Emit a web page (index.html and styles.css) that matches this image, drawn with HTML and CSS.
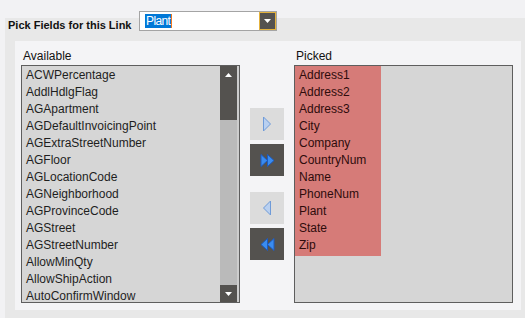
FILE: index.html
```html
<!DOCTYPE html>
<html>
<head>
  <meta charset="UTF-8">
  <title>Pick Fields</title>
  <link rel="stylesheet" href="styles.css">
</head>
<body>
  <div class="panel">
    <div class="panel-head">
      <div class="head-title">Pick Fields for this Link</div>
      <div class="combo">
        <div class="combo-text"><span class="combo-sel">Plant</span><span class="caret"></span></div>
        <div class="combo-btn">
          <svg width="7" height="4" viewBox="0 0 7 4"><polygon points="0,0 7,0 3.5,4" fill="#fff"/></svg>
        </div>
      </div>
    </div>

    <div class="panel-body">
      <!-- available fields -->
      <div class="col">
        <div class="col-label">Available</div>
        <div class="listbox">
          <ul class="items">
            <li>ACWPercentage</li>
            <li>AddlHdlgFlag</li>
            <li>AGApartment</li>
            <li>AGDefaultInvoicingPoint</li>
            <li>AGExtraStreetNumber</li>
            <li>AGFloor</li>
            <li>AGLocationCode</li>
            <li>AGNeighborhood</li>
            <li>AGProvinceCode</li>
            <li>AGStreet</li>
            <li>AGStreetNumber</li>
            <li>AllowMinQty</li>
            <li>AllowShipAction</li>
            <li>AutoConfirmWindow</li>
          </ul>
          <div class="scrollbar">
            <div class="sb-top">
              <svg width="7" height="4" viewBox="0 0 7 4"><polygon points="3.5,0 7,4 0,4" fill="#fff"/></svg>
            </div>
            <div class="sb-track"></div>
            <div class="sb-bottom">
              <svg width="7" height="4" viewBox="0 0 7 4"><polygon points="0,0 7,0 3.5,4" fill="#fff"/></svg>
            </div>
          </div>
        </div>
      </div>

      <!-- move buttons -->
      <div class="moves">
        <div class="move-btn light">
          <svg width="10" height="16" viewBox="0 0 10 16"><polygon points="1.5,1 8.5,8 1.5,15" fill="#b9d0f0" stroke="#6f9bd8" stroke-width="1"/></svg>
        </div>
        <div class="move-btn dark">
          <svg width="15" height="13" viewBox="0 0 15 13"><polygon points="1,0.5 7.5,6.5 1,12.5" fill="#3a8cf0" stroke="#1d5bc0"/><polygon points="7.5,0.5 14,6.5 7.5,12.5" fill="#3a8cf0" stroke="#1d5bc0"/></svg>
        </div>
        <div class="move-btn light spaced">
          <svg width="10" height="16" viewBox="0 0 10 16"><polygon points="8.5,1 1.5,8 8.5,15" fill="#b9d0f0" stroke="#6f9bd8" stroke-width="1"/></svg>
        </div>
        <div class="move-btn dark">
          <svg width="15" height="13" viewBox="0 0 15 13"><polygon points="7.5,0.5 1,6.5 7.5,12.5" fill="#3a8cf0" stroke="#1d5bc0"/><polygon points="14,0.5 7.5,6.5 14,12.5" fill="#3a8cf0" stroke="#1d5bc0"/></svg>
        </div>
      </div>

      <!-- picked fields -->
      <div class="col">
        <div class="col-label">Picked</div>
        <div class="listbox">
          <ul class="items picked">
            <li>Address1</li>
            <li>Address2</li>
            <li>Address3</li>
            <li>City</li>
            <li>Company</li>
            <li>CountryNum</li>
            <li>Name</li>
            <li>PhoneNum</li>
            <li>Plant</li>
            <li>State</li>
            <li>Zip</li>
          </ul>
        </div>
      </div>
    </div>
  </div>
</body>
</html>
```

FILE: styles.css
```css
body {
  margin: 0;
  background: #f2f2f4;
  font-family: "Liberation Sans", Arial, sans-serif;
  font-size: 12px;
  color: #1e1e1e;
  overflow: hidden;
}

.panel {
  margin: 18px 0 0 5px;
  width: 530px;
  height: 310px;
  background: #e8e8e8;
}

.panel-head {
  display: flex;
  align-items: flex-start;
  height: 23px;
}

.head-title {
  width: 134px;
  box-sizing: border-box;
  padding: 1px 0 0 3px;
  font-size: 11px;
  font-weight: bold;
  line-height: 13px;
  color: #111;
}

.combo {
  display: flex;
  margin-top: -7px;
  width: 138px;
  height: 20px;
  box-sizing: border-box;
  border: 1px solid #a4a4a4;
  background: #fff;
}

.combo-text {
  flex: 1;
  display: flex;
  align-items: center;
  padding-left: 5px;
}

.combo-sel {
  background: #0078d7;
  color: #fff;
  font-size: 12px;
  letter-spacing: -0.6px;
  line-height: 14px;
  padding: 0 1px;
}

.caret {
  width: 1px;
  height: 14px;
  background: #f07820;
}

.combo-btn {
  width: 17px;
  box-sizing: border-box;
  border: 1px solid #e4b23c;
  background: #54524f;
  display: flex;
  align-items: center;
  justify-content: center;
}

.panel-body {
  display: flex;
  margin-left: 10px;
  width: 506px;
  height: 269px;
  box-sizing: border-box;
  padding: 8px 0 0 6px;
  background: #f4f4f6;
}

.col {
  display: flex;
  flex-direction: column;
  width: 219px;
}

.col-label {
  padding-left: 2px;
  line-height: 14px;
  margin-bottom: 2px;
  color: #111;
}

.listbox {
  display: flex;
  height: 238px;
  box-sizing: border-box;
  border: 1px solid #5e5e5e;
  background: #d6d6d6;
  overflow: hidden;
}

.items {
  flex: 1;
  list-style: none;
  margin: 0;
  padding: 1px 0 0;
}

.items li {
  height: 17px;
  line-height: 17px;
  padding-left: 4px;
  white-space: nowrap;
}

.items.picked {
  flex: none;
  align-self: flex-start;
  width: 86px;
  padding-bottom: 2px;
  background: #d67b78;
  color: #2e0c0c;
}

.scrollbar {
  display: flex;
  flex-direction: column;
  width: 17px;
  border-right: 2px solid #cdcdcd;
  background: #bababa;
}

.sb-top {
  height: 54px;
  background: #54524f;
  display: flex;
  justify-content: center;
  padding-top: 7px;
  box-sizing: border-box;
}

.sb-track {
  flex: 1;
}

.sb-bottom {
  height: 17px;
  background: #54524f;
  display: flex;
  align-items: center;
  justify-content: center;
}

.moves {
  display: flex;
  flex-direction: column;
  width: 34px;
  margin: 59px 10px 0;
}

.move-btn {
  height: 32px;
  margin-bottom: 4px;
  display: flex;
  align-items: center;
  justify-content: center;
}

.move-btn.spaced {
  margin-top: 12px;
}

.move-btn.light {
  background: #dcdcdc;
}

.move-btn.dark {
  background: #54524f;
}
```
